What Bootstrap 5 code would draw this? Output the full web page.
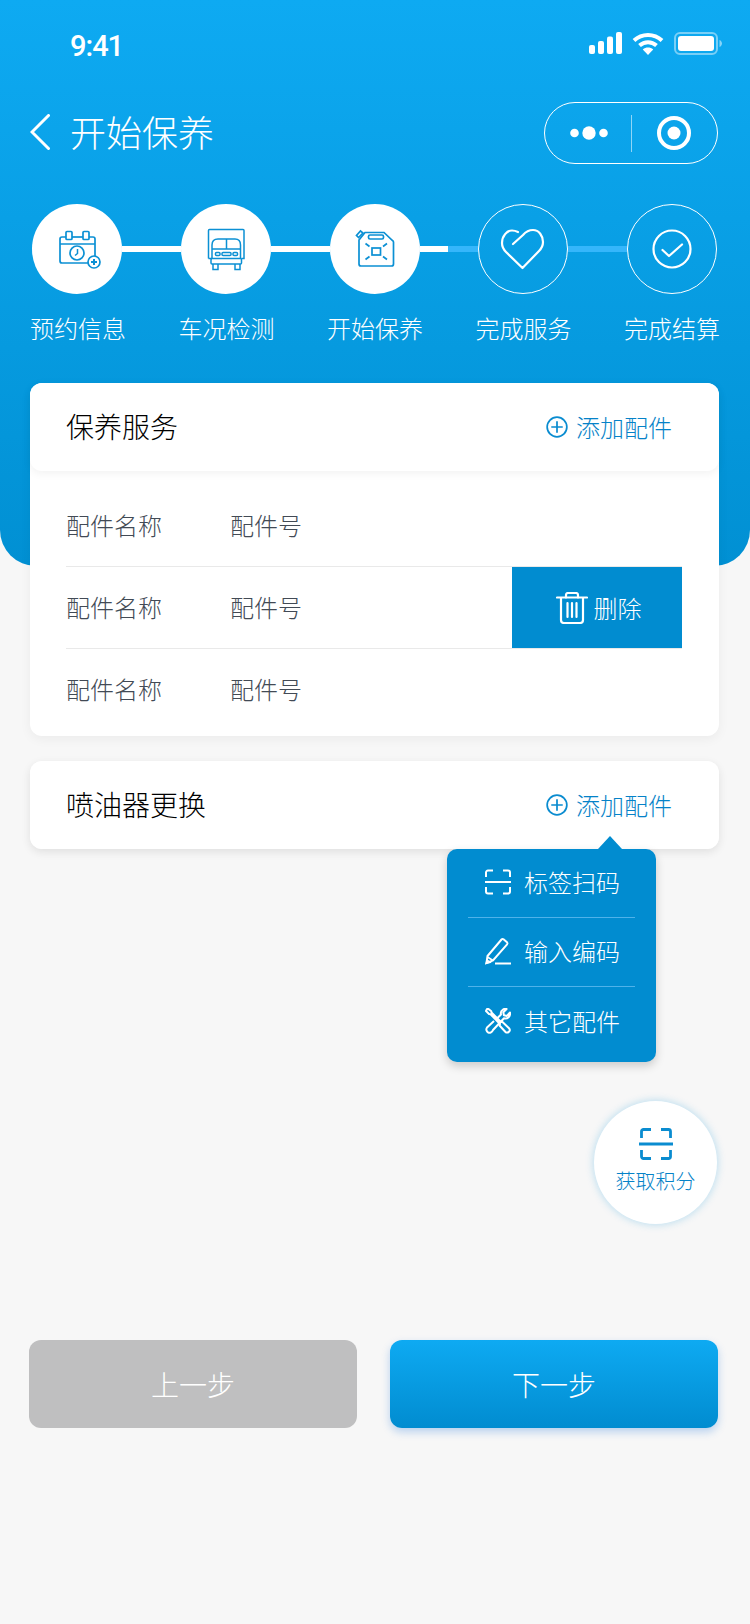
<!DOCTYPE html>
<html lang="zh-CN">
<head>
<meta charset="utf-8">
<title>开始保养</title>
<link href="https://cdn.jsdelivr.net/npm/bootstrap@5.3.0/dist/css/bootstrap.min.css" rel="stylesheet">
<style>
html,body{margin:0;background:#f7f7f7}
body{font-family:"Noto Sans CJK SC","Liberation Sans",sans-serif;font-weight:300;width:750px;height:1624px;overflow:hidden}
.hero-top{height:566px;background:linear-gradient(180deg,#0eaaf2 0%,#0190d3 100%);border-radius:0 0 36px 36px;color:#fff}
.status-row{height:96px;padding:0 28px 0 70px}
.clock-txt{font-family:"Roboto","Liberation Sans",sans-serif;font-size:29px;font-weight:500;letter-spacing:-1px;line-height:1;margin-top:-3px}
.status-icons{gap:10px;margin-bottom:10px}
.nav-row{height:72px;padding:0 32px 0 30px}
.page-title{font-size:36px;line-height:1;margin-left:20px;font-weight:300;margin-top:-2px}
.capsule{width:174px;height:62px;border:1px solid #fff;border-radius:31px;margin-top:2px}
.capsule-side{width:87px}
.dots-svg{margin-left:3px}
.capsule-line{width:1px;height:37px;background:rgba(255,255,255,.55)}
.steps-row{padding:36px 33px 0 32px}
.step-dot{width:90px;height:90px;border-radius:50%;flex:none}
.step-on{background:#fff}
.step-off{border:1px solid #fff}
.step-link{height:6px;flex:1 1 0;background:#fff}
.step-link-half{background:linear-gradient(90deg,#fff 0,#fff 28px,#35b6fb 28px)}
.step-link-off{background:#35b6fb}
.labels-row{padding:19px 30px 0 30px;font-size:24px;line-height:30px;font-weight:300}
.labels-row>span{width:96px;white-space:nowrap;text-align:center}
.content-wrap{margin-top:-183px;padding:0 31px 0 30px}
.panel{background:#fff;border-radius:12px;box-shadow:0 3px 12px rgba(0,0,0,.05);position:relative}
.panel-head{height:88px;padding:0 47px 0 36px;border-radius:12px;box-shadow:0 3px 8px rgba(0,0,0,.05);background:#fff}
.panel-name{font-size:28px;color:#000;line-height:1;font-weight:300;margin-top:-3px}
.add-link{font-size:24px;color:#0582c8;line-height:1;font-weight:300}
.add-link svg{margin-right:8px}
.part-list{padding:0 37px 0 36px}
.part-row{font-size:24px;color:#424a55;display:flex;align-items:center;position:relative;font-weight:300}
.part-row span:first-child{width:164px}
.row-a{height:96px;padding-top:13px;border-bottom:1px solid #e9e9e9}
.row-b{height:82px;padding-bottom:2px;border-bottom:1px solid #e9e9e9}
.row-c{height:87px;padding-bottom:8px}
.del-btn{position:absolute;right:0;top:0;bottom:0;width:170px;background:#018cd0;color:#fff;font-size:24px;gap:6px;display:flex;align-items:center;justify-content:center;padding-left:3px}
.gap-cards{margin-top:25px}
.pop-menu{position:absolute;left:417px;top:88px;width:209px;height:213px;background:#018cd0;border-radius:10px;box-shadow:0 4px 10px rgba(0,0,0,.18);color:#fff;font-size:24px;z-index:3;font-weight:300}
.pop-menu::before{content:"";position:absolute;left:151px;top:-13px;border-left:12px solid transparent;border-right:12px solid transparent;border-bottom:13px solid #018cd0}
.pop-item{height:69px;margin:0 21px;padding:0 0 2px 17px;display:flex;align-items:center;gap:13px;border-bottom:1px solid #4fb2ea;white-space:nowrap}
.pop-item:last-child{border-bottom:0}
.fab-row{margin-top:252px;padding-right:2px}
.fab-btn{width:123px;height:123px;border-radius:50%;background:#fff;box-shadow:0 0 9px rgba(12,150,220,.3);color:#0582c8;font-size:20px;line-height:1;font-weight:300}
.fab-btn svg{margin-top:-6px;margin-bottom:11px}
.foot-row{margin-top:116px;gap:33px;margin-left:-1px;margin-right:1px}
.step-btn{flex:1 1 0;height:88px;border:0;border-radius:12px;font-size:28px;font-weight:300;color:#fff;display:flex;align-items:center;justify-content:center;line-height:1}
.btn-prev{background:#bfbfc0}
.btn-next{background:linear-gradient(180deg,#0eaaf2 0%,#018cd0 100%);box-shadow:0 4px 9px rgba(20,110,220,.28)}
</style>
</head>
<body>
<div class="hero-top">
  <div class="status-row d-flex align-items-center justify-content-between">
    <span class="clock-txt">9:41</span>
    <div class="status-icons d-flex align-items-center">
      <svg width="34" height="22" viewBox="0 0 34 22" fill="#fff"><rect x="1" y="13" width="6" height="9" rx="2"/><rect x="10" y="9" width="6" height="13" rx="2"/><rect x="19" y="4.500" width="6" height="17.500" rx="2"/><rect x="28" y="0" width="6" height="22" rx="2"/></svg>
      <svg width="32" height="23" viewBox="0 0 32 23" fill="none" stroke="#fff" stroke-width="4"><path d="M2 8.500C10 1 22 1 30 8.500"/><path d="M7.500 13.500C12.500 9 19.500 9 24.500 13.500"/><path d="M16 23l-5.200-5.500c3-2.600 7.400-2.600 10.400 0z" fill="#fff" stroke="none"/></svg>
      <svg width="48" height="23" viewBox="0 0 48 23" fill="none"><rect x="1" y="1" width="42" height="21" rx="5" stroke="#fff" stroke-opacity=".45" stroke-width="2"/><rect x="4" y="4" width="36" height="15" rx="3" fill="#fff"/><path d="M45.500 8v7c1.500-.6 2.500-2 2.500-3.500S47 8.600 45.500 8z" fill="#fff" fill-opacity=".5"/></svg>
    </div>
  </div>
  <div class="nav-row d-flex align-items-center justify-content-between">
    <div class="d-flex align-items-center">
      <svg width="20" height="36" viewBox="0 0 20 36" fill="none" stroke="#fff" stroke-width="3"><path d="M18.500 1.500L2 18l16.500 16.500" stroke-linecap="round"/></svg>
      <span class="page-title">开始保养</span>
    </div>
    <div class="capsule d-flex align-items-center">
      <div class="capsule-side d-flex justify-content-center">
        <svg class="dots-svg" width="38" height="14" viewBox="0 0 38 14" fill="#fff"><circle cx="4.500" cy="7" r="4.300"/><circle cx="19" cy="7" r="6.700"/><circle cx="33.500" cy="7" r="4.300"/></svg>
      </div>
      <div class="capsule-line"></div>
      <div class="capsule-side d-flex justify-content-center">
        <svg width="34" height="34" viewBox="0 0 34 34"><circle cx="17" cy="17" r="15" fill="none" stroke="#fff" stroke-width="4"/><circle cx="17" cy="17" r="6.500" fill="#fff"/></svg>
      </div>
    </div>
  </div>
  <div class="steps-row d-flex align-items-center">
    <div class="step-dot step-on">
      <svg width="90" height="90" viewBox="0 0 90 90" fill="none" stroke="#0b90d4" stroke-width="1.700">
        <path d="M34 33h-4a2 2 0 0 0-2 2v22a2 2 0 0 0 2 2h26"/><path d="M40 33h11"/><path d="M57 33h4a2 2 0 0 1 2 2v17"/>
        <rect x="34" y="27.500" width="6" height="8" rx="1"/><rect x="51" y="27.500" width="6" height="8" rx="1"/>
        <path d="M28 40h35"/>
        <circle cx="45" cy="49" r="7"/><path d="M45.500 45v4.500l-2.500 2" stroke-width="1.500"/>
        <circle cx="62" cy="58" r="6" fill="#fff"/><path d="M59 58h6M62 55v6" stroke-width="2"/>
      </svg>
    </div>
    <div class="step-link"></div>
    <div class="step-dot step-on">
      <svg width="90" height="90" viewBox="0 0 90 90" fill="none" stroke="#0b90d4" stroke-width="1.500">
        <path d="M27.500 54.500V26.500a1 1 0 0 1 1-1h33.500a1 1 0 0 1 1 1v28h-2.500"/>
        <path d="M31 54.500V41c0-3.500 2-6 6-6h17c3.500 0 5.500 2.500 5.500 6v13.500"/>
        <path d="M45.500 35v10M31 45h28.500"/>
        <rect x="34.500" y="48.500" width="4.500" height="3" rx="1"/><rect x="41" y="48.500" width="9" height="3" rx="1"/><rect x="52" y="48.500" width="4.500" height="3" rx="1"/>
        <rect x="30" y="54.500" width="30.500" height="5.500" rx="1"/>
        <path d="M32 60v5.500h5V60M54 60v5.500h5V60M27.500 54.500H31"/>
      </svg>
    </div>
    <div class="step-link"></div>
    <div class="step-dot step-on">
      <svg width="90" height="90" viewBox="0 0 90 90" fill="none" stroke="#0b90d4" stroke-width="1.700">
        <path d="M35 28.500h19l8.500 8a2 2 0 0 1 1 2v21.500a2 2 0 0 1-2 2H31a2 2 0 0 1-2-2V36z"/>
        <path d="M28.500 33.500l-2-2 4-4.500 2.500 2z"/>
        <rect x="38.500" y="31" width="15" height="4" rx="1.500"/>
        <rect x="42" y="44" width="8.500" height="7"/>
        <path d="M35.500 39.500l4 3M57 39.500l-4 3M35.500 55.500l4-3M57 55.500l-4-3"/>
      </svg>
    </div>
    <div class="step-link step-link-half"></div>
    <div class="step-dot step-off">
      <svg width="88" height="88" viewBox="0 0 88 88" fill="none" stroke="#fff" stroke-width="2.200" stroke-linecap="round" stroke-linejoin="round">
        <path d="M34 39L44 30C47 26.500 50 25 54 25C60 25 64 31 64 37C64 41 62 44 60 46L43.500 63L27 47C24.500 44.500 23 41.500 23 38C23 31 28 25.500 33 25.500C35 25.500 37 26 39 27"/>
      </svg>
    </div>
    <div class="step-link step-link-off"></div>
    <div class="step-dot step-off">
      <svg width="88" height="88" viewBox="0 0 88 88" fill="none" stroke="#fff" stroke-width="2.200" stroke-linecap="round" stroke-linejoin="round">
        <circle cx="44" cy="44" r="18.500"/><path d="M34.500 45l6.500 6 13-11.500"/>
      </svg>
    </div>
  </div>
  <div class="labels-row d-flex justify-content-between">
    <span>预约信息</span><span>车况检测</span><span>开始保养</span><span>完成服务</span><span>完成结算</span>
  </div>
</div>

<div class="content-wrap">
  <div class="panel">
    <div class="panel-head d-flex align-items-center justify-content-between">
      <span class="panel-name">保养服务</span>
      <span class="add-link d-flex align-items-center"><svg width="22" height="22" viewBox="0 0 23 23" fill="none" stroke="#0a8cd0" stroke-width="1.800"><circle cx="11.500" cy="11.500" r="10.300"/><path d="M5.500 11.500h12M11.500 5.500v12"/></svg>添加配件</span>
    </div>
    <div class="part-list">
      <div class="part-row row-a"><span>配件名称</span><span>配件号</span></div>
      <div class="part-row row-b"><span>配件名称</span><span>配件号</span>
        <div class="del-btn"><svg width="32" height="32" viewBox="0 0 32 32" fill="none" stroke="#fff" stroke-width="2.200" stroke-linecap="round"><path d="M1 5.500h30"/><path d="M10 5.500V3a2 2 0 0 1 2-2h8a2 2 0 0 1 2 2v2.500"/><path d="M5 6v22a3 3 0 0 0 3 3h16a3 3 0 0 0 3-3V6"/><path d="M11.500 11v14M16 11v14M20.500 11v14"/></svg>删除</div>
      </div>
      <div class="part-row row-c"><span>配件名称</span><span>配件号</span></div>
    </div>
  </div>

  <div class="panel gap-cards">
    <div class="panel-head d-flex align-items-center justify-content-between">
      <span class="panel-name">喷油器更换</span>
      <span class="add-link d-flex align-items-center"><svg width="22" height="22" viewBox="0 0 23 23" fill="none" stroke="#0a8cd0" stroke-width="1.800"><circle cx="11.500" cy="11.500" r="10.300"/><path d="M5.500 11.500h12M11.500 5.500v12"/></svg>添加配件</span>
    </div>
    <div class="pop-menu">
      <div class="pop-item"><svg width="26" height="26" viewBox="0 0 26 26" fill="none" stroke="#fff" stroke-width="2"><path d="M8 1.500H3A2 2 0 0 0 1 3.500V8M18 1.500h5a2 2 0 0 1 2 2V8M8 24.500H3a2 2 0 0 1-2-2V18M18 24.500h5a2 2 0 0 0 2-2V18M0 13h26"/></svg>标签扫码</div>
      <div class="pop-item"><svg width="26" height="28" viewBox="0 0 26 28" fill="none" stroke="#fff" stroke-width="2"><path d="M1.500 26l1-7L16.500 2.500a1.500 1.500 0 0 1 2-.2l3.500 3a1.500 1.500 0 0 1 .1 2L8 23.500z"/><path d="M2.500 20l5.500 3.500" stroke-width="1.500"/><path d="M1.500 26l3-.8-2.200-1.800z" fill="#fff"/><path d="M10 26.500h16"/></svg>输入编码</div>
      <div class="pop-item"><svg width="26" height="26" viewBox="0 0 26 26" fill="none" stroke="#fff" stroke-width="2" stroke-linejoin="round"><path d="M2 1L1 3l3 3 1.500.2L15 16l-.5 1.500L20.500 24c1.500 1.400 3.400 0 3.800-.6.700-1 .6-2.300-.3-3.200L17.500 14H16L6.500 4.500 6.300 3.300 3.500 1z"/><path d="M12 10.500l4-4c-.6-2.300.3-4 2-5 1.200-.7 2.400-.8 3.600-.5l-3.300 3.300.6 3 3 .6L25 4.500c.3 2-.2 3.500-1.400 4.700-1.300 1.200-3 1.500-4.600 1L8 22c-.7 2-3 3.400-5 2.300-1.500-1-2.300-3-1-4.800L9 13"/></svg>其它配件</div>
    </div>
  </div>

  <div class="fab-row d-flex justify-content-end">
    <div class="fab-btn d-flex flex-column align-items-center justify-content-center">
      <svg width="34" height="32" viewBox="0 0 34 32" fill="none" stroke="#0a8cd0" stroke-width="2.800"><path d="M12 1.500H4.500a2 2 0 0 0-2 2V10M22 1.500h7.500a2 2 0 0 1 2 2V10M12 30.500H4.500a2 2 0 0 1-2-2V22M22 30.500h7.500a2 2 0 0 0 2-2V22M0 16h34"/></svg>
      <span>获取积分</span>
    </div>
  </div>

  <div class="foot-row d-flex">
    <div class="step-btn btn-prev">上一步</div>
    <div class="step-btn btn-next">下一步</div>
  </div>
</div>
<script src="https://cdn.jsdelivr.net/npm/bootstrap@5.3.0/dist/js/bootstrap.bundle.min.js"></script>
</body>
</html>
